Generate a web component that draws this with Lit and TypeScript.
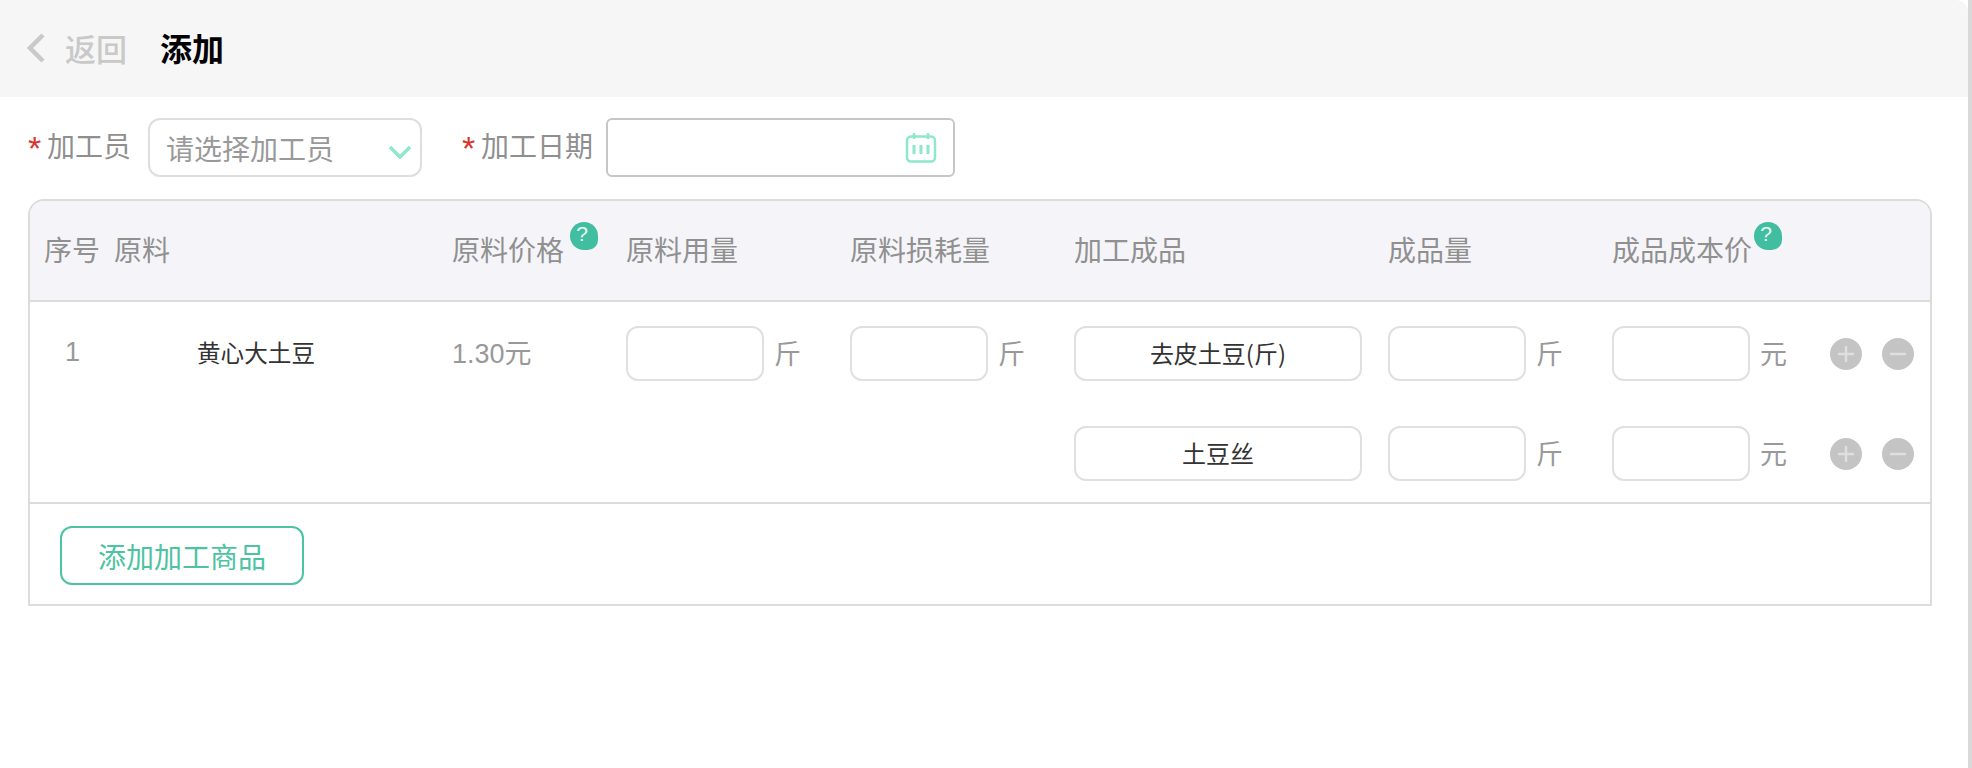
import { LitElement, html, css, svg } from "lit";
import { customElement } from "lit/decorators.js";

const circle = (plus: boolean) => html`<svg class="circle" viewBox="0 0 32 32" width="32" height="32">
  <circle cx="16" cy="16" r="16" fill="#c4c4c4"></circle>
  ${plus ? svg`<path d="M16 8v16" stroke="#dfdfdf" stroke-width="2.5"></path>` : null}
  <path d="M8 16h16" stroke="#dfdfdf" stroke-width="2.5"></path>
</svg>`;

@customElement("app-root")
export class AppRoot extends LitElement {
  static styles = css`
    :host {
      display: block;
      min-height: 768px;
      background: #fff;
      font-family: "Noto Sans CJK SC", "Noto Sans", sans-serif;
      color: #999;
      box-sizing: border-box;
      overflow: hidden;
      border-right: 4px solid #d9d9d9;
    }
    * { box-sizing: border-box; }
    .top {
      height: 97px;
      background: #f6f6f6;
      border-top-right-radius: 12px;
      display: flex;
      align-items: center;
      padding: 0 0 2px 27px;
    }
    .backtxt { font-size: 31px; line-height: 40px; font-weight: 500; color: #c9c9c9; margin-left: 20px; margin-right: 33px; }
    .title { font-size: 32px; line-height: 40px; font-weight: 700; color: #000; margin-top: -2px; }
    .form {
      display: flex;
      align-items: center;
      height: 59px;
      margin-top: 21px;
      padding-left: 28px;
    }
    .req {
      color: #d9342b; font-family: "Liberation Sans", sans-serif;
      font-size: 34px; width: 19px; line-height: 38px; height: 38px;
    }
    .lab { font-size: 28px; line-height: 38px; color: #8f8f8f; margin-top: -5px; }
    .select {
      width: 274px; height: 59px; margin-left: 17px; margin-right: 40px;
      border: 2px solid #dedede; border-radius: 12px;
      display: flex; align-items: center; justify-content: space-between;
      padding: 0 8px 0 16px;
      font-size: 28px; color: #999;
    }
    .chev { margin-top: 8px; }
    .date {
      width: 349px; height: 59px; margin-left: 13px;
      border: 2px solid #c6c6c6; border-radius: 6px;
      display: flex; align-items: center; justify-content: flex-end;
      padding-right: 16px;
    }
    .table {
      margin: 22px 0 0 28px;
      width: 1904px;
      border: 2px solid #dcdcdc;
      border-top-left-radius: 16px;
      border-top-right-radius: 16px;
    }
    .grid {
      display: grid;
      grid-template-columns: 70px 338px 174px 224px 224px 314px 224px 1fr;
      padding-left: 14px;
      align-items: center;
    }
    .head {
      height: 101px;
      padding-bottom: 3px;
      background: #f5f5f9;
      border-top-left-radius: 14px;
      border-top-right-radius: 14px;
      border-bottom: 2px solid #dcdcdc;
      font-size: 28px;
      color: #909090;
    }
    .head > div { white-space: nowrap; line-height: 38px; position: relative; }
    .help {
      position: absolute;
      top: -8px;
      width: 28px;
      height: 28px;
      border-radius: 50% 50% 36% 50%;
      background: #41bd9f;
      color: #e8f8f3;
      font-size: 21px;
      line-height: 24px;
      padding-right: 4px;
      text-align: center;
      font-family: "Liberation Sans", sans-serif;
    }
    .help.a { left: 118px; }
    .help.b { left: 142px; }
    .body { padding: 24px 0 21px; border-bottom: 2px solid #dcdcdc; }
    .row { height: 55px; }
    .row + .row { margin-top: 45px; }
    .num { font-size: 27px; color: #999; padding-left: 21px; margin-top: -3px; font-family: "Liberation Sans", "Noto Sans CJK SC", sans-serif; }
    .name { font-size: 23.6px; color: #333; text-align: center; width: 284px; margin-top: -4px; }
    .price { font-size: 27px; color: #999; margin-top: -4px; font-family: "Liberation Sans", "Noto Sans CJK SC", sans-serif; }
    .cell { display: flex; align-items: center; }
    .input {
      height: 55px;
      width: 138px;
      border: 2px solid #e0e0e0;
      border-radius: 12px;
      flex: none;
    }
    .input.wide {
      width: 288px;
      font-size: 24px;
      color: #333;
      padding-bottom: 2px;
      display: flex; align-items: center; justify-content: center;
    }
    .unit { font-size: 27px; color: #999; margin-left: 10px; margin-top: -2px; }
    .acts { display: flex; gap: 20px; margin-left: 43px; flex: none; }
    .circle { display: block; }
    .foot { height: 100px; padding: 22px 0 0 30px; }
    .add {
      width: 244px; height: 59px;
      border: 2px solid #4cc3a1; border-radius: 12px;
      color: #4cc3a1; font-size: 28px;
      display: flex; align-items: center; justify-content: center;
      background: #fff;
    }
  `;

  private qty(unit: string) {
    return html`<div class="cell"><div class="input"></div><span class="unit">${unit}</span></div>`;
  }

  private costCell() {
    return html`<div class="cell"><div class="input"></div><span class="unit">元</span>
      <div class="acts">${circle(true)}${circle(false)}</div></div>`;
  }

  render() {
    return html`
      <div class="top">
        <svg width="18" height="30" viewBox="0 0 18 30">
          <path d="M16 2 3 15l13 13" fill="none" stroke="#c9c9c9" stroke-width="4.5"></path>
        </svg>
        <span class="backtxt">返回</span>
        <span class="title">添加</span>
      </div>
      <div class="form">
        <span class="req">*</span><span class="lab">加工员</span>
        <div class="select">
          <span>请选择加工员</span>
          <svg class="chev" width="24" height="14" viewBox="0 0 24 14"><path d="M2 2l10 10L22 2" fill="none" stroke="#8fe8c8" stroke-width="3.5"></path></svg>
        </div>
        <span class="req">*</span><span class="lab">加工日期</span>
        <div class="date">
          <svg width="32" height="32" viewBox="0 0 32 32">
            <rect x="2" y="4.5" width="28" height="25" rx="4" fill="none" stroke="#8fe8c8" stroke-width="2.5"></rect>
            <path d="M9 1v6M23 1v6" stroke="#8fe8c8" stroke-width="2.5" fill="none"></path>
            <path d="M9 13v9M16 13v9M23 13v9" stroke="#8fe8c8" stroke-width="3" fill="none"></path>
          </svg>
        </div>
      </div>
      <div class="table">
        <div class="grid head">
          <div>序号</div><div>原料</div>
          <div>原料价格<span class="help a">?</span></div>
          <div>原料用量</div><div>原料损耗量</div><div>加工成品</div><div>成品量</div>
          <div>成品成本价<span class="help b">?</span></div>
        </div>
        <div class="body">
          <div class="grid row">
            <div class="num">1</div><div class="name">黄心大土豆</div><div class="price">1.30元</div>
            ${this.qty("斤")}${this.qty("斤")}
            <div class="cell"><div class="input wide">去皮土豆(斤)</div></div>
            ${this.qty("斤")}${this.costCell()}
          </div>
          <div class="grid row">
            <div></div><div></div><div></div><div></div><div></div>
            <div class="cell"><div class="input wide">土豆丝</div></div>
            ${this.qty("斤")}${this.costCell()}
          </div>
        </div>
        <div class="foot"><div class="add">添加加工商品</div></div>
      </div>
    `;
  }
}
